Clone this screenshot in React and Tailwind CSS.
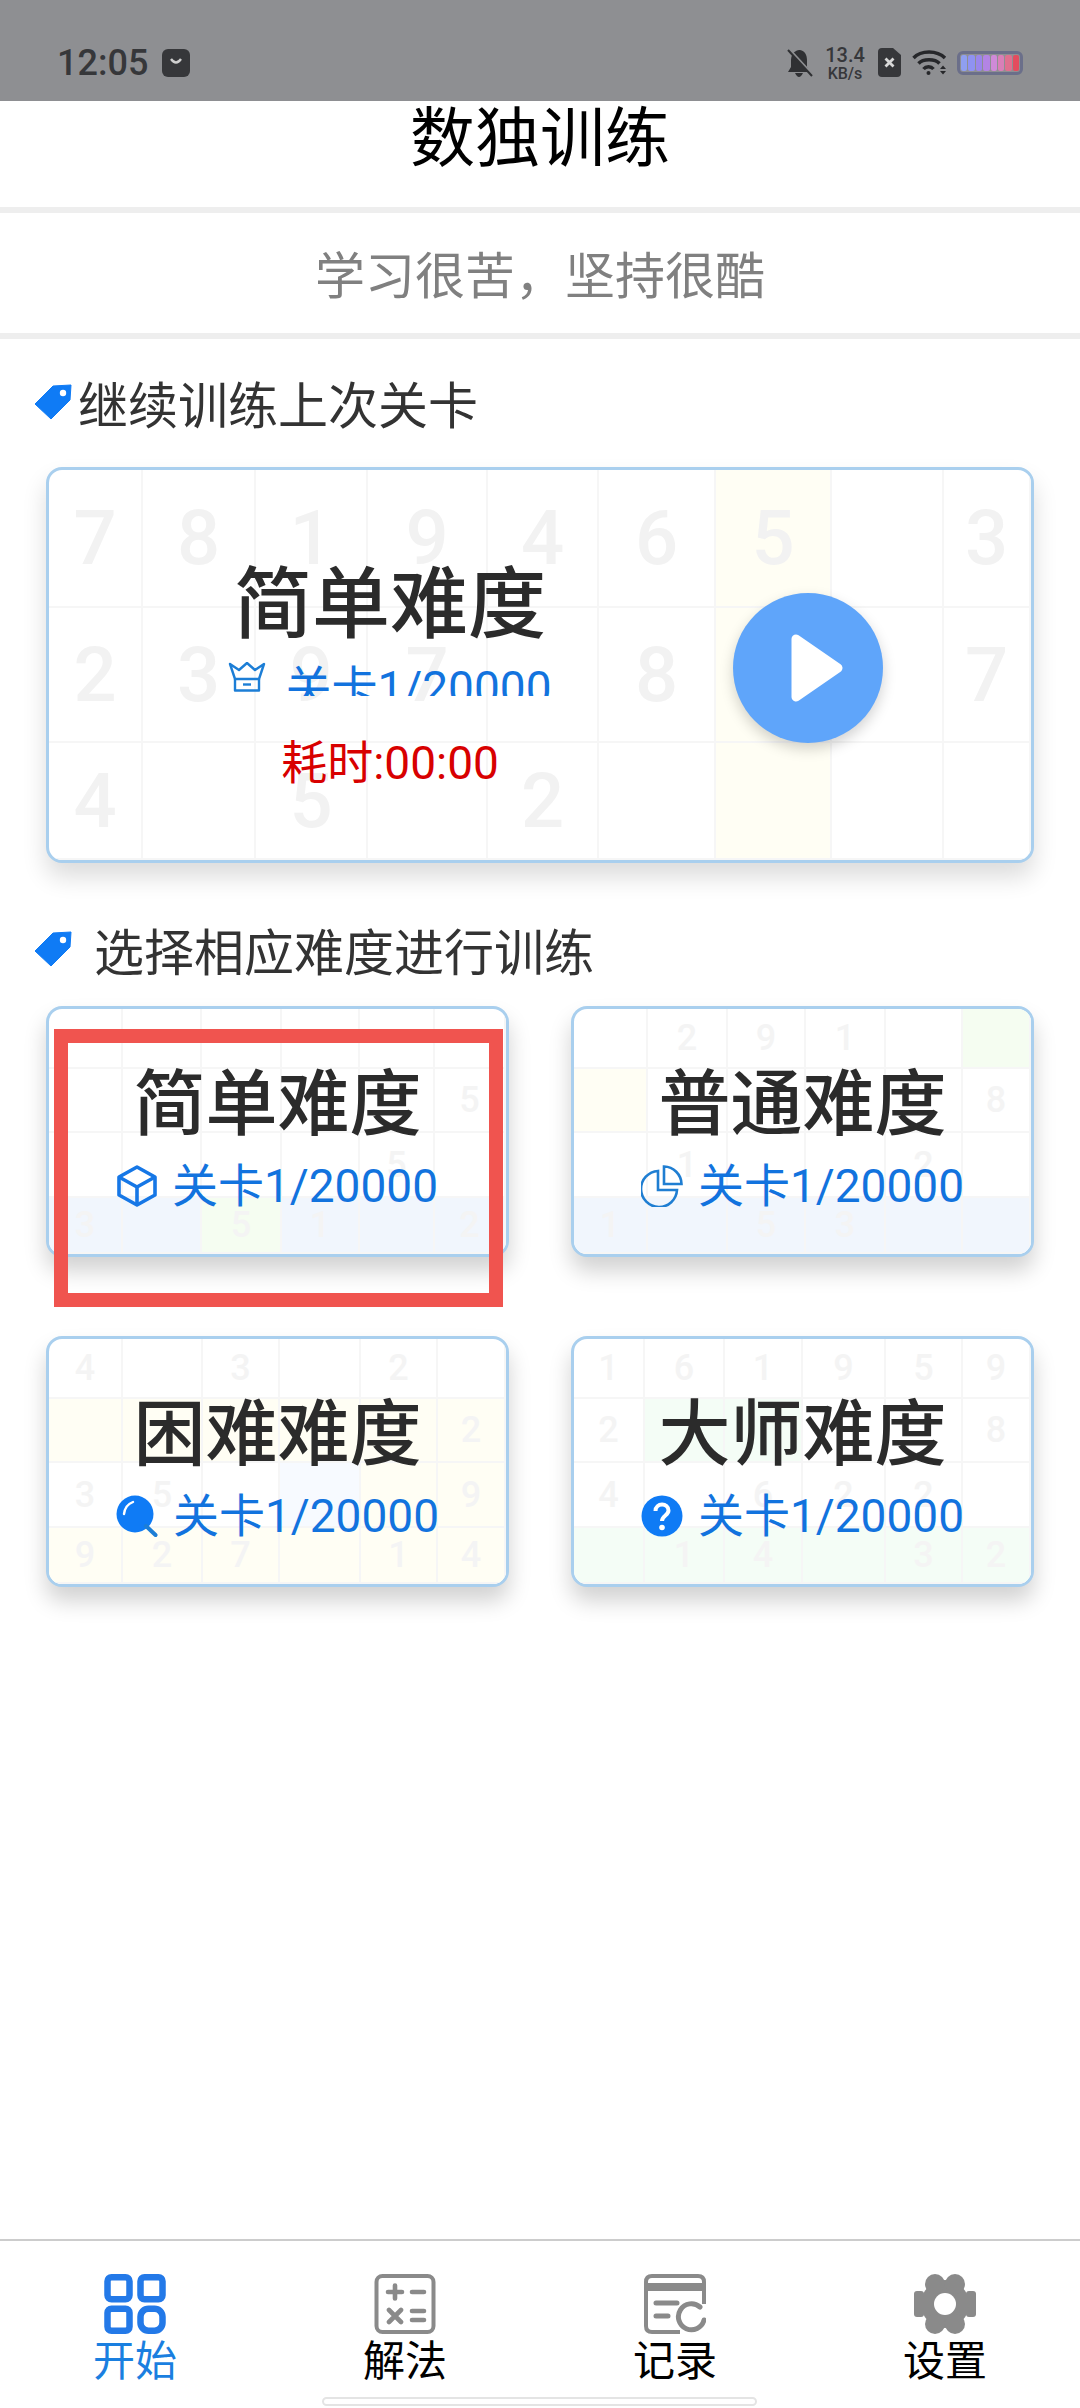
import React from "react";

const FONT = "font-['Noto_Sans_CJK_SC','Noto_Sans',sans-serif]";

function Tag() {
  return (
    <svg width="37" height="36" viewBox="0 0 37 36" className="shrink-0">
      <path d="M36 1 L18 2 L0 20 L16 35 L35 16 Z" fill="#0f7bf5" stroke="#0f7bf5" strokeLinejoin="round" />
      <circle cx="28" cy="9" r="3.2" fill="#fff" />
    </svg>
  );
}

function Crown() {
  return (
    <svg width="38" height="30" viewBox="0 0 38 30" fill="none" stroke="#1c7ed6" strokeWidth="2.4" strokeLinejoin="round" className="shrink-0">
      <path d="M7 17 L2 2 L11 8 L19 1 L27 8 L36 2 L31 17 Z" />
      <path d="M7 17 V28.5 H31 V17" />
      <path d="M15 22.5 H23" />
    </svg>
  );
}

function Cube() {
  return (
    <svg width="40" height="42" viewBox="0 0 40 42" fill="none" stroke="#1677e6" strokeWidth="3.6" strokeLinejoin="round">
      <path d="M20 2 L38 12 V30 L20 40 L2 30 V12 Z" />
      <path d="M2 12 L20 22 L38 12 M20 22 V40" />
    </svg>
  );
}

function Pie() {
  return (
    <svg width="42" height="42" viewBox="0 0 42 42" fill="none" stroke="#1f7ed2" strokeWidth="2.6">
      <path d="M17 6 A18 18 0 1 0 36 25 H17 Z" />
      <path d="M23 1.5 A18 18 0 0 1 40.5 19 H23 Z" />
    </svg>
  );
}

function Search() {
  return (
    <svg width="42" height="42" viewBox="0 0 42 42">
      <circle cx="19" cy="19" r="18.5" fill="#0f7bf5" />
      <path d="M30 31 L39.5 40" stroke="#1c7ed6" strokeWidth="4" strokeLinecap="round" />
      <path d="M8 19 Q9 10 17 7" stroke="#fff" strokeWidth="2.4" fill="none" strokeLinecap="round" />
    </svg>
  );
}

function Question() {
  return (
    <svg width="42" height="42" viewBox="0 0 42 42">
      <circle cx="21" cy="21" r="20.5" fill="#0f7bf5" />
      <path d="M14.5 16 C14.5 7.5 27.5 7.5 27.5 15.5 C27.5 20.5 21 20.5 21 26" stroke="#fff" strokeWidth="4" fill="none" />
      <circle cx="21" cy="32.5" r="2.8" fill="#fff" />
    </svg>
  );
}

function Play() {
  return (
    <svg width="52" height="68" viewBox="0 0 52 68">
      <path d="M5 5 L47 34 L5 63 Z" fill="#fff" stroke="#fff" strokeWidth="9" strokeLinejoin="round" />
    </svg>
  );
}

function NavHome() {
  return (
    <svg width="62" height="60" viewBox="0 0 62 60" fill="none" stroke="#2379e8" strokeWidth="6.5">
      <rect x="3.5" y="3.25" width="22" height="22" rx="4" />
      <rect x="36.5" y="3.25" width="22" height="22" rx="4" />
      <rect x="3.5" y="34.75" width="22" height="22" rx="4" />
      <rect x="36.5" y="34.75" width="22" height="22" rx="8" />
    </svg>
  );
}

function NavCalc() {
  return (
    <svg width="62" height="60" viewBox="0 0 62 60" fill="none" stroke="#8a8a8a">
      <rect x="2.5" y="2" width="57" height="56" rx="6" strokeWidth="4" />
      <path d="M14 18 H28 M21 11.5 V24.5 M38 18 H50 M15 36 L27 48 M27 36 L15 48 M38 37 H50 M38 46 H50" strokeWidth="4.6" strokeLinecap="round" />
    </svg>
  );
}

function NavRecord() {
  return (
    <svg width="62" height="60" viewBox="0 0 62 60" fill="none" stroke="#8a8a8a">
      <path d="M36 58 H8 Q2 58 2 52 V8 Q2 2 8 2 H54 Q60 2 60 8 V30" strokeWidth="4" />
      <path d="M2 13 H60" strokeWidth="8" />
      <path d="M12 29 H33 M12 42 H24" strokeWidth="5" strokeLinecap="round" />
      <path d="M56 33 A13 13 0 1 0 60 46" strokeWidth="5" strokeLinecap="round" />
    </svg>
  );
}

function NavGear() {
  return (
    <svg width="64" height="60" viewBox="0 0 64 60" fill="#8a8a8a">
      <circle cx="32" cy="30" r="24" />
      <circle cx="22" cy="10" r="10" />
      <circle cx="42" cy="10" r="10" />
      <circle cx="22" cy="50" r="10" />
      <circle cx="42" cy="50" r="10" />
      <rect x="1" y="17" width="10" height="26" rx="3" />
      <rect x="53" y="17" width="10" height="26" rx="3" />
      <circle cx="32" cy="30" r="11" fill="#fff" />
    </svg>
  );
}

function StatusIcons() {
  const bars = ["#8f9ff0", "#8f92f2", "#9a86ec", "#b384e4", "#cf8ad8", "#d97fb8", "#e0708f", "#e44c5e"];
  return (
    <div className="flex items-center">
      <svg width="26" height="28" viewBox="0 0 26 28" className="mr-[10px]">
        <path d="M12 1 C6 2 4 7 4 12 V18 L1 23 H23 L20 18 V11 C20 6 18 2 13 1 Z M8 24 H16 Q14 28 12 28 Q10 28 8 24 Z" fill="#2f3033" />
        <path d="M3 1 L26 26" stroke="#8e8f92" strokeWidth="2.5" />
        <path d="M1 1 L25 27" stroke="#2f3033" strokeWidth="2" />
      </svg>
      <div className="flex flex-col items-center w-[44px] text-[#36373a] font-['Roboto',sans-serif] font-medium">
        <span className="text-[20px] leading-[21px]">13.4</span>
        <span className="text-[16px] leading-[15px]">KB/s</span>
      </div>
      <svg width="23" height="29" viewBox="0 0 23 29" className="ml-[11px]">
        <path d="M4 0 H15 L23 7 V25 Q23 29 19 29 H4 Q0 29 0 25 V4 Q0 0 4 0 Z" fill="#36373a" />
        <path d="M7.5 10.5 L15.5 18.5 M15.5 10.5 L7.5 18.5" stroke="#d8d8d8" strokeWidth="2.8" />
      </svg>
      <svg width="35" height="27" viewBox="0 0 35 27" fill="none" className="ml-[11px]" stroke="#26272a" strokeWidth="3.4">
        <path d="M1.5 9 C9 1 25 1 33 9" />
        <path d="M6.5 14.5 C11 9.5 23 9.5 27.5 14.5" />
        <path d="M11.5 20 C14 17 19 17 21.5 20" />
        <circle cx="16.5" cy="24" r="2" fill="#26272a" stroke="none" />
        <path d="M28 20 L31 16.5 L34 20 Z M28 22 L31 25.5 L34 22 Z" fill="#26272a" stroke="none" />
      </svg>
      <div className="ml-[10px] w-[66px] h-[24px] rounded-[6px] border-[3px] border-[#6b6f8a] flex gap-[1px] p-[1px] overflow-hidden">
        {bars.map((c) => (
          <div key={c} className="flex-1 rounded-[2px]" style={{ backgroundColor: c }} />
        ))}
      </div>
    </div>
  );
}

/* Faded sudoku boards printed behind the cards */
function Board({ cols, rows, cells, digit, tint }) {
  return (
    <div
      className="absolute inset-0 grid overflow-hidden rounded-[13px]"
      style={{ gridTemplateColumns: cols, gridTemplateRows: rows }}
    >
      {cells.flat().map((c, i) => (
        <div
          key={i}
          className={`flex items-center justify-center border-r-2 border-b-2 border-[#f6f6f6] font-['Roboto',sans-serif] font-medium ${digit}`}
          style={{ backgroundColor: (tint && tint[i]) || "transparent" }}
        >
          {c}
        </div>
      ))}
    </div>
  );
}

const Y = "#fffef4";
const B = "#f1f6fd";
const G = "#f5fdf1";
const M = "#f4fdf6";

const boards = [
  {
    title: "简单难度",
    icon: <Cube />,
    cols: "74px 79px 80px 78px 75px 1fr",
    cells: [["", "", "", "", "", ""], ["", "", "", "", "", "5"], ["", "", "", "", "5", ""], ["3", "", "5", "1", "", "2"]],
    tint: { 18: B, 19: B, 20: G, 21: B, 22: B, 23: B },
  },
  {
    title: "普通难度",
    icon: <Pie />,
    cols: "74px 80px 78px 80px 77px 1fr",
    cells: [["", "2", "9", "1", "", ""], ["", "", "", "", "", "8"], ["", "1", "", "", "2", ""], ["1", "", "5", "3", "", ""]],
    tint: { 5: G, 6: Y, 18: B, 19: B, 20: B, 21: B, 22: B, 23: B },
  },
  {
    title: "困难难度",
    icon: <Search />,
    cols: "74px 80px 77px 81px 77px 1fr",
    cells: [["4", "", "3", "", "2", ""], ["", "", "", "", "", "2"], ["3", "5", "", "", "", "9"], ["9", "2", "7", "", "1", "4"]],
    tint: { 6: Y, 7: Y, 8: Y, 9: Y, 10: Y, 11: Y, 15: "#f7faff", 16: Y, 17: Y, 18: Y, 19: Y, 20: Y, 21: Y, 22: Y, 23: Y },
  },
  {
    title: "大师难度",
    icon: <Question />,
    cols: "71px 80px 78px 83px 77px 1fr",
    cells: [["1", "6", "1", "9", "5", "9"], ["2", "", "", "", "", "8"], ["4", "", "6", "2", "2", ""], ["", "1", "4", "", "3", "2"]],
    tint: { 7: M, 8: M, 18: M, 19: M, 20: M, 21: M, 22: M, 23: M },
  },
];

const mainCells = [
  ["7", "8", "1", "9", "4", "6", "5", "", "3"],
  ["2", "3", "9", "7", "", "8", "", "", "7"],
  ["4", "", "5", "", "2", "", "", "", ""],
];

function DiffCard({ title, icon, cols, cells, tint, highlight }) {
  return (
    <div className="relative h-[251px] rounded-[16px] border-[3px] border-[#a9cfee] bg-white shadow-[0_14px_22px_rgba(0,0,0,0.18)]">
      <Board cols={cols} rows="60px 64px 65px 1fr" cells={cells} digit="text-[36px] text-[#f4f4f4]" tint={tint} />
      <div className="relative flex flex-col items-center pt-[53px]">
        <div className="text-[72px] leading-[72px] font-medium text-[#2b2b2b]">{title}</div>
        <div className="mt-[30px] h-[44px] flex items-center gap-[15px]">
          {icon}
          <span className="text-[46px] leading-[44px] text-[#1273de] font-['Roboto','Noto_Sans_CJK_SC',sans-serif]">关卡1/20000</span>
        </div>
      </div>
      {highlight && (
        <div className="absolute left-[5px] top-[20px] w-[449px] h-[278px] border-[14px] border-[#f0544f]" />
      )}
    </div>
  );
}

function NavItem({ icon, label, active }) {
  return (
    <div className="flex-1 flex flex-col items-center">
      {icon}
      <div className={`mt-[2px] text-[42px] leading-[44px] ${active ? "text-[#1a7fe0]" : "text-black"}`}>{label}</div>
    </div>
  );
}

export default function App() {
  return (
    <div className={`relative w-[1080px] h-[2408px] overflow-hidden bg-white flex flex-col ${FONT}`}>
      <div className="h-[101px] shrink-0 bg-[#8e8f92] flex items-center justify-between pl-[57px] pr-[57px] pt-[24px]">
        <div className="flex items-center gap-[14px]">
          <span className="text-[36px] leading-[36px] font-medium text-[#36373a] font-['Roboto',sans-serif]">12:05</span>
          <svg width="28" height="28" viewBox="0 0 28 28">
            <rect width="28" height="28" rx="6" fill="#36373a" />
            <path d="M9 10 Q14 17 19 10" stroke="#cfcfcf" strokeWidth="2.4" fill="none" />
          </svg>
        </div>
        <StatusIcons />
      </div>

      <div className="h-[106px] shrink-0 flex justify-center">
        <span className="text-[65px] leading-[66px] text-black mt-[-1px]">数独训练</span>
      </div>
      <div className="h-[6px] shrink-0 bg-[#eeeeee]" />
      <div className="h-[120px] shrink-0 flex items-center justify-center pb-[2px] text-[50px] text-[#808080]">
        学习很苦，坚持很酷
      </div>
      <div className="h-[6px] shrink-0 bg-[#eeeeee]" />

      <div className="px-[35px] pt-[35px] flex items-center gap-[6px] h-[90px] shrink-0">
        <Tag />
        <span className="text-[50px] leading-[50px] text-[#333333]">继续训练上次关卡</span>
      </div>

      <div className="mx-[46px] mt-[38px] shrink-0 relative h-[396px] rounded-[16px] border-[3px] border-[#a9cfee] bg-white shadow-[0_14px_24px_rgba(0,0,0,0.14)]">
        <Board
          cols="94px 113px 112px 120px 111px 117px 116px 112px 1fr"
          rows="138px 135px 1fr"
          cells={mainCells}
          digit="text-[76px] text-[#f2f2f2]"
          tint={{ 6: Y, 15: Y, 24: Y }}
        />
        <div className="relative h-full flex">
          <div className="w-[682px] flex flex-col items-center pt-[89px]">
            <div className="text-[78px] leading-[78px] font-medium text-[#2b2b2b]">简单难度</div>
            <div className="mt-[25px] h-[34px] flex items-start gap-[19px] overflow-hidden">
              <Crown />
              <span className="mt-[4px] text-[46px] leading-[44px] text-[#1273de] font-['Roboto','Noto_Sans_CJK_SC',sans-serif]">关卡1/20000</span>
            </div>
            <div className="mt-[42px] text-[46px] leading-[50px] text-[#d80000] font-['Roboto','Noto_Sans_CJK_SC',sans-serif]">耗时:00:00</div>
          </div>
          <div className="self-center ml-[2px] w-[150px] h-[150px] rounded-full bg-[#5fa5fa] flex items-center justify-center shadow-[0_6px_14px_rgba(0,0,0,0.18)] pl-[18px] mt-[5px]">
            <Play />
          </div>
        </div>
      </div>

      <div className="px-[35px] pt-[29px] flex items-center gap-[22px] h-[143px] shrink-0">
        <Tag />
        <span className="text-[50px] leading-[50px] text-[#333333]">选择相应难度进行训练</span>
      </div>

      <div className="grid grid-cols-2 gap-x-[62px] gap-y-[79px] mx-[46px] shrink-0">
        {boards.map((b, i) => (
          <DiffCard key={b.title} {...b} highlight={i === 0} />
        ))}
      </div>

      <div className="flex-1" />

      <div className="h-[169px] shrink-0 border-t-2 border-[#cccccc] bg-white pt-[33px] flex">
        <NavItem icon={<NavHome />} label="开始" active />
        <NavItem icon={<NavCalc />} label="解法" />
        <NavItem icon={<NavRecord />} label="记录" />
        <NavItem icon={<NavGear />} label="设置" />
      </div>

      <div className="absolute left-[322px] top-[2397px] w-[435px] h-[9px] rounded-full bg-white border-2 border-[#e4e4e4]" />
    </div>
  );
}
